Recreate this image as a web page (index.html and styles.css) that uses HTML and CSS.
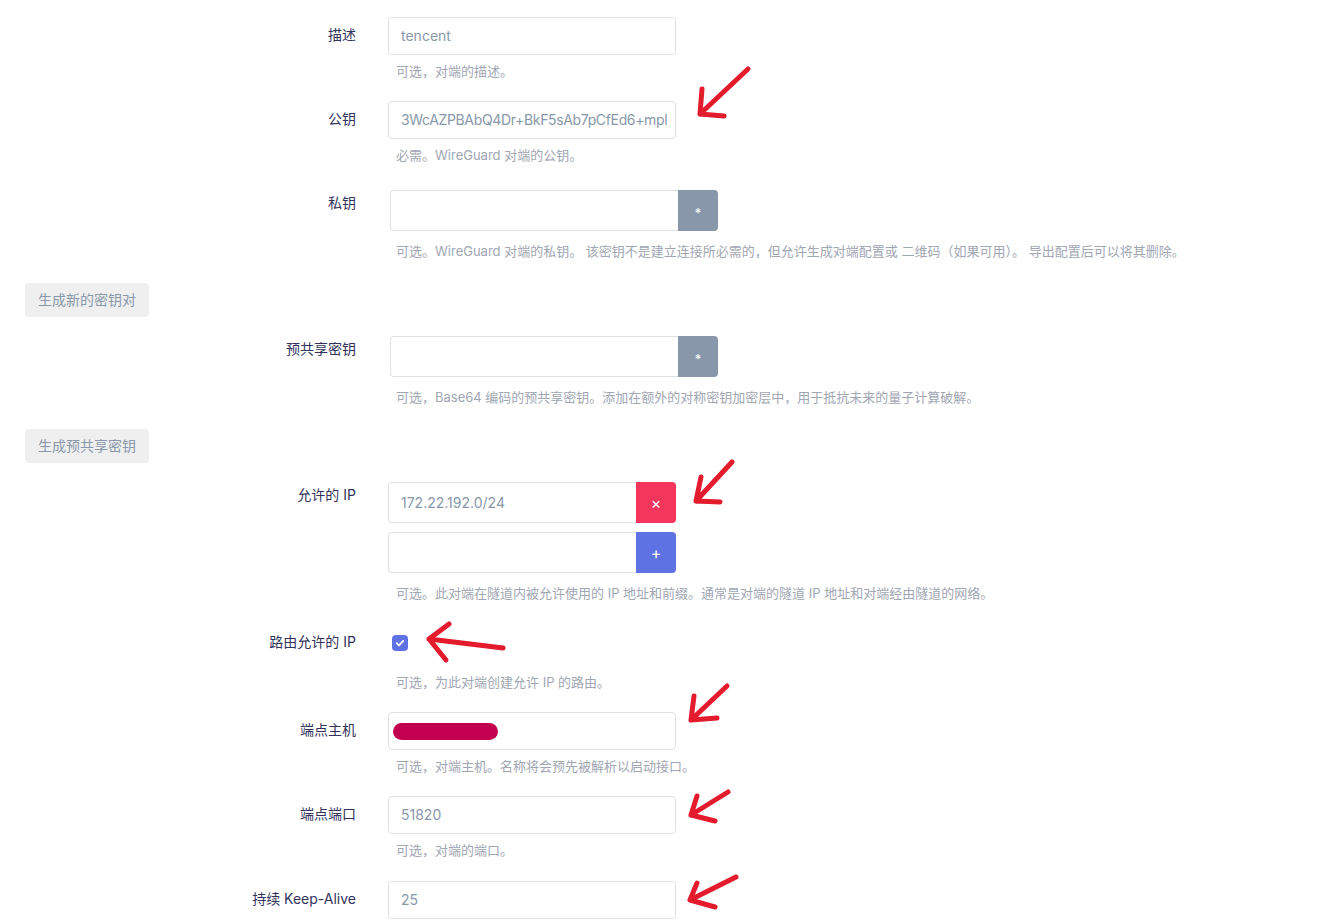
FILE: index.html
```html
<!DOCTYPE html>
<html lang="zh-CN">
<head>
<meta charset="utf-8">
<title>Peer</title>
<link rel="stylesheet" href="styles.css">
</head>
<body>
<div class="form">
  <div class="row first">
    <div class="label">描述</div>
    <div class="field">
      <div class="input">tencent</div>
      <div class="help">可选，对端的描述。</div>
    </div>
  </div>

  <div class="row">
    <div class="label">公钥</div>
    <div class="field">
      <div class="input key">3WcAZPBAbQ4Dr+BkF5sAb7pCfEd6+mpl</div>
      <div class="help">必需。WireGuard 对端的公钥。</div>
    </div>
  </div>

  <div class="row grouprow">
    <div class="label">私钥</div>
    <div class="field shifted">
      <div class="group wide">
        <div class="input gin"></div>
        <div class="gbtn gray">*</div>
      </div>
      <div class="help h6">可选。WireGuard 对端的私钥。 该密钥不是建立连接所必需的，但允许生成对端配置或 二维码（如果可用）。 导出配置后可以将其删除。</div>
    </div>
  </div>

  <div class="btnrow"><span class="btn">生成新的密钥对</span></div>

  <div class="row grouprow afterbtn">
    <div class="label">预共享密钥</div>
    <div class="field shifted">
      <div class="group wide">
        <div class="input gin"></div>
        <div class="gbtn gray">*</div>
      </div>
      <div class="help h6">可选，Base64 编码的预共享密钥。添加在额外的对称密钥加密层中，用于抵抗未来的量子计算破解。</div>
    </div>
  </div>

  <div class="btnrow"><span class="btn">生成预共享密钥</span></div>

  <div class="row grouprow afterbtn">
    <div class="label">允许的 IP</div>
    <div class="field">
      <div class="group">
        <div class="input gin">172.22.192.0/24</div>
        <div class="gbtn red">×</div>
      </div>
      <div class="group second">
        <div class="input gin"></div>
        <div class="gbtn blue">+</div>
      </div>
      <div class="help">可选。此对端在隧道内被允许使用的 IP 地址和前缀。通常是对端的隧道 IP 地址和对端经由隧道的网络。</div>
    </div>
  </div>

  <div class="row checkrow">
    <div class="label">路由允许的 IP</div>
    <div class="field">
      <div class="checkwrap">
        <span class="check">
          <svg width="10" height="10" viewBox="0 0 10 10"><path d="M1.8 5.2 L4 7.3 L8.2 2.8" fill="none" stroke="#fff" stroke-width="1.8" stroke-linecap="round" stroke-linejoin="round"/></svg>
        </span>
      </div>
      <div class="help h12">可选，为此对端创建允许 IP 的路由。</div>
    </div>
  </div>

  <div class="row">
    <div class="label">端点主机</div>
    <div class="field">
      <div class="input redacted"><span class="blob"></span></div>
      <div class="help">可选，对端主机。名称将会预先被解析以启动接口。</div>
    </div>
  </div>

  <div class="row">
    <div class="label">端点端口</div>
    <div class="field">
      <div class="input">51820</div>
      <div class="help">可选，对端的端口。</div>
    </div>
  </div>

  <div class="row last">
    <div class="label">持续 Keep-Alive</div>
    <div class="field">
      <div class="input">25</div>
    </div>
  </div>
</div>

<svg class="arrows" width="1322" height="923" viewBox="0 0 1322 923">
  <g fill="none" stroke="#e41b2c" stroke-width="5" stroke-linecap="round" stroke-linejoin="round">
    <path d="M748 69 L700 114 M702 89 L700 114 L724 116"/>
    <path d="M732 462 L696 501 M701 477 L696 501 L720 502"/>
    <path d="M503 648 L429 639 M449 624 L429 639 L446 660"/>
    <path d="M727 686 L691 720 M694 696 L691 720 L717 718"/>
    <path d="M728 792 L691 815 M697 796 L691 815 L715 821"/>
    <path d="M736 877 L690 900 M697 883 L690 900 L715 907"/>
  </g>
</svg>
</body>
</html>
```

FILE: styles.css
```css
* { box-sizing: border-box; }

html, body {
  margin: 0;
  padding: 0;
  background: #ffffff;
}

body {
  width: 1322px;
  height: 923px;
  overflow: hidden;
  position: relative;
  font-family: Inter, "Noto Sans CJK SC", sans-serif;
}

.form {
  padding-top: 17px;
}

.row {
  display: flex;
  align-items: flex-start;
  margin-top: 21px;
}

.row.first { margin-top: 0; }
.row.grouprow { margin-top: 26px; }
.row.afterbtn { margin-top: 19px; }
.row.last { margin-top: 22px; }

.label {
  width: 356px;
  flex: none;
  text-align: right;
  font-size: 14px;
  line-height: 20px;
  color: #32325d;
  padding-top: 8px;
}

.grouprow .label { padding-top: 3px; }
.checkrow .label { padding-top: 9px; }

.field {
  margin-left: 32px;
  width: 288px;
  flex: none;
}

.field.shifted { margin-left: 34px; }

.input {
  height: 38px;
  border: 1px solid #dee2e6;
  border-radius: 4px;
  padding: 0 12px;
  font-size: 14px;
  line-height: 36px;
  color: #8898aa;
  background: #fff;
  white-space: nowrap;
  overflow: hidden;
}

.input.key {
  letter-spacing: -0.35px;
  padding-right: 0;
}

.help {
  margin-top: 7px;
  padding-left: 8px;
  font-size: 13px;
  line-height: 18px;
  color: #a1a6b3;
  white-space: nowrap;
}

.grouprow .help { margin-top: 11px; }
.help.h6 { padding-left: 6px; }
.help.h12 { margin-top: 12px; }

.group {
  display: flex;
  height: 41px;
  width: 288px;
}

.group.wide { width: 328px; }
.group.second { margin-top: 9px; }

.group .gin {
  flex: 1;
  height: 41px;
  line-height: 39px;
  border-right: none;
  border-radius: 4px 0 0 4px;
}

.gbtn {
  width: 40px;
  flex: none;
  height: 41px;
  border-radius: 0 4px 4px 0;
  color: #ffffff;
  display: flex;
  align-items: center;
  justify-content: center;
  font-size: 14px;
}

.gbtn.gray { background: #8898aa; font-size: 13px; padding-top: 4px; }
.gbtn.red { background: #f5365c; font-size: 16px; }
.gbtn.blue { background: #5e72e4; font-size: 16px; }

.btnrow {
  margin-top: 23px;
  padding-left: 25px;
}

.btn {
  display: inline-block;
  width: 124px;
  height: 34px;
  line-height: 34px;
  text-align: center;
  background: #efefef;
  border-radius: 4px;
  font-size: 14px;
  color: #8898aa;
}

.checkwrap {
  height: 38px;
  display: flex;
  align-items: center;
  padding-left: 4px;
  padding-top: 2px;
}

.check {
  width: 16px;
  height: 16px;
  border-radius: 4px;
  background: #5e72e4;
  display: flex;
  align-items: center;
  justify-content: center;
}

.check svg { display: block; }

.redacted {
  display: flex;
  align-items: center;
  padding-left: 4px;
}

.blob {
  display: block;
  width: 105px;
  height: 17px;
  border-radius: 9px;
  background: #c2004f;
}

.arrows {
  position: absolute;
  left: 0;
  top: 0;
  pointer-events: none;
}
```
